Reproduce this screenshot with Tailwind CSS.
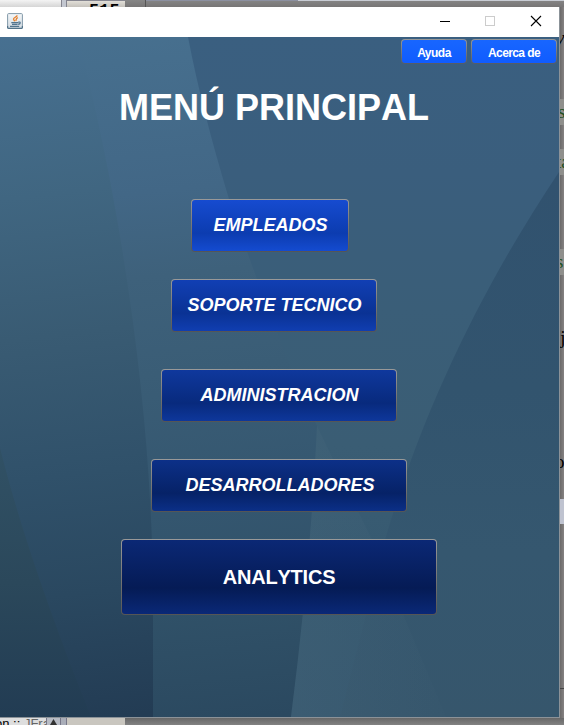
<!DOCTYPE html>
<html lang="es">
<head>
<meta charset="utf-8">
<title>Menú principal</title>
<script src="https://cdn.jsdelivr.net/npm/@tailwindcss/browser@4"></script>
</head>
<body class="relative h-[725px] w-[564px] overflow-hidden bg-[#808080] font-['Liberation_Sans',Arial,sans-serif]">
<!-- Editor behind the window: top strip -->
<div class="flex h-[7px] overflow-hidden bg-gradient-to-b from-[#868686] to-[#777575]">
  <div class="w-[61px] bg-gradient-to-b from-[#f4f4f4] to-[#d5d5d5]"></div>
  <div class="w-[5px] border-l border-[#85858f] bg-[#c3c7d0]"></div>
  <div class="relative w-[59px] border-l border-t border-[#85858f] bg-gradient-to-b from-[#e2dfd8] to-[#c5c2bc]"><span class="absolute left-[22px] top-[2px] font-['Liberation_Mono',monospace] text-[17px] leading-[16px] font-bold text-black">515</span></div>
  <div class="w-[21px] border-r border-[#555]"></div>
  <div class="w-[152px] border-t border-[#8c90a0]"></div>
  <div class="flex-1 border-t border-[#c8ccd4]"></div>
</div>
<div class="flex h-[711px]">
  <!-- Application window -->
  <main class="flex w-[560px] flex-col border-b border-r border-[#8b9298]">
    <header class="flex h-[30px] shrink-0 items-center bg-white pl-[7px]">
      <svg class="mt-[-2px] h-4 w-4" viewBox="0 0 16 16" fill="none">
        <defs><linearGradient id="ic" x2="0" y2="1"><stop stop-color="#f4f7f9"/><stop offset="1" stop-color="#d3dce3"/></linearGradient></defs>
        <rect x=".6" y=".6" width="14.8" height="14.8" rx="1" fill="url(#ic)" stroke="#8299a8"/>
        <path d="M.7 13v2.3h14.6V13" stroke="#456880"/>
        <path d="M10.200 2.300C10 4 6.300 4.500 6.500 6.200 6.700 7.200 7.600 7.400 7.700 8.400M10.900 4.600C8.300 5.400 9.800 6.400 8.700 7.800" stroke="#e7802d" stroke-width="1.300"/>
        <path d="M4.300 9.600h7M5 11.300h5.600M3 13.300h9.200M11.300 9.100c2.600-.6 2.600 1.900-.2 2.300" stroke="#53758e" stroke-width="1.200"/>
      </svg>
      <svg class="ml-auto h-[30px] w-[137px]" viewBox="0 0 137 30" fill="none" shape-rendering="crispEdges">
        <path d="M18 14.500h10" stroke="#000"/>
        <rect x="63.500" y="9.500" width="9" height="9" stroke="#ccc"/>
        <path d="M109 9l10 10M119 9l-10 10" stroke="#000" stroke-width="1.100" shape-rendering="auto"/>
      </svg>
    </header>
    <section class="relative isolate flex h-[680px] flex-col items-start overflow-hidden">
      <svg class="absolute inset-0 -z-10 h-[680px] w-[559px]" viewBox="0 37 559 680" preserveAspectRatio="none">
        <defs>
          <linearGradient id="base" x2="0" y2="1"><stop stop-color="#3a5f80"/><stop offset=".2" stop-color="#3a5e7d"/><stop offset=".4" stop-color="#3a5e78"/><stop offset=".6" stop-color="#3a5d74"/><stop offset=".8" stop-color="#365970"/><stop offset="1" stop-color="#36576e"/></linearGradient>
          <linearGradient id="mid" gradientUnits="userSpaceOnUse" x1="180" y1="20" x2="250" y2="717"><stop stop-color="#47708f"/><stop offset=".24" stop-color="#426786"/><stop offset=".36" stop-color="#3e617b"/><stop offset=".5" stop-color="#3a5d76"/><stop offset=".7" stop-color="#34566f"/><stop offset=".84" stop-color="#305168"/><stop offset="1" stop-color="#2b4960"/></linearGradient>
          <linearGradient id="left" gradientUnits="userSpaceOnUse" x1="30" y1="20" x2="110" y2="717"><stop stop-color="#487192"/><stop offset=".25" stop-color="#406681"/><stop offset=".45" stop-color="#395b73"/><stop offset=".65" stop-color="#30516a"/><stop offset=".82" stop-color="#2a4860"/><stop offset="1" stop-color="#233c54"/></linearGradient>
          <linearGradient id="corner" x2="0" y2="1"><stop stop-color="#315165"/><stop offset=".5" stop-color="#2b485b"/><stop offset="1" stop-color="#223c53"/></linearGradient>
          <linearGradient id="right" x2="0" y2="1"><stop stop-color="#31526f"/><stop offset=".4" stop-color="#32546e"/><stop offset=".7" stop-color="#35576f"/><stop offset="1" stop-color="#36566c"/></linearGradient>
          <linearGradient id="facet" gradientUnits="userSpaceOnUse" x1="300" y1="0" x2="440" y2="0"><stop stop-color="#48687c" stop-opacity=".28"/><stop offset="1" stop-color="#48687c" stop-opacity=".05"/></linearGradient>
        </defs>
        <path fill="url(#base)" d="M0 37h559v680H0z"/>
        <path fill="url(#mid)" d="M0 37H188Q202 110 229 199 254 275 292 370L317 426Q311 560 291 717H0z"/>
        <path fill="url(#left)" d="M0 37H78C125 220 153 430 153 600V717H0z"/>
        <path fill="url(#corner)" d="M0 448Q28 560 91 717H0z"/>
        <path fill="url(#right)" d="M559 172C490 275 425 400 385 540L340 717H559z"/>
        <path fill="url(#facet)" d="M317 426L372 540 446 717H291Q311 560 317 426z"/>
      </svg>
      <nav class="mt-[2px] mr-[2px] flex gap-[4px] self-end text-[12px] font-bold text-white">
        <button class="h-[25px] w-[66px] rounded-[4px] bg-gradient-to-b from-[#999] to-[#555b66] p-px"><span class="flex h-full items-center justify-center rounded-[3px] bg-gradient-to-b from-[#1866ff] to-[#105cff] pt-[2px] tracking-[-0.5px]">Ayuda</span></button>
        <button class="h-[25px] w-[86px] rounded-[4px] bg-gradient-to-b from-[#999] to-[#555b66] p-px"><span class="flex h-full items-center justify-center rounded-[3px] bg-gradient-to-b from-[#1866ff] to-[#105cff] pt-[2px] tracking-[-0.6px]">Acerca de</span></button>
      </nav>
      <h1 class="mt-[24px] ml-[119px] h-[40px] text-[36px] leading-[40px] font-bold whitespace-nowrap text-white [font-kerning:none]">MENÚ PRINCIPAL</h1>
      <div class="mt-[71px] ml-[121px] flex w-[316px] flex-col text-[18px] font-bold text-white italic [font-kerning:none]">
        <button class="ml-[70px] h-[53px] w-[158px] rounded-[4px] bg-gradient-to-b from-[#999] to-[#555] p-px"><span class="flex h-full items-center justify-center rounded-[3px] bg-linear-[#164bd0,#0c3cb0_65%,#144bd0] pb-px pl-px italic">EMPLEADOS</span></button>
        <button class="mt-[27px] ml-[50px] h-[53px] w-[206px] rounded-[4px] bg-gradient-to-b from-[#999] to-[#555] p-px"><span class="flex h-full items-center justify-center rounded-[3px] bg-linear-[#113fb4,#0a3294_65%,#103eb1] pb-px pl-px italic">SOPORTE TECNICO</span></button>
        <button class="mt-[37px] ml-[40px] h-[53px] w-[236px] rounded-[4px] bg-gradient-to-b from-[#999] to-[#555] p-px"><span class="flex h-full items-center justify-center rounded-[3px] bg-linear-[#0f389d,#082a7d_65%,#0e379b] pb-px pl-px italic">ADMINISTRACION</span></button>
        <button class="mt-[37px] ml-[30px] h-[53px] w-[256px] rounded-[4px] bg-gradient-to-b from-[#999] to-[#555] p-px"><span class="flex h-full items-center justify-center rounded-[3px] bg-linear-[#0c3088,#062267_65%,#0b2f87] pb-px pl-[2px] italic">DESARROLLADORES</span></button>
        <button class="mt-[27px] h-[76px] w-[316px] rounded-[4px] bg-gradient-to-b from-[#999] to-[#555] p-px text-[20px] not-italic"><span class="flex h-full items-center justify-center rounded-[3px] bg-linear-[#0b2875,#051b55_65%,#0a2877] tracking-[-0.2px]">ANALYTICS</span></button>
      </div>
    </section>
  </main>
  <!-- Visible edge of the editor's code -->
  <aside class="relative w-[4px] overflow-hidden bg-gradient-to-r from-[#6b6969] to-[#858282] font-['Liberation_Serif',serif] text-[19px] leading-[20px] text-black">
    <span class="absolute -left-[4px] top-[21px] italic">y</span>
    <span class="absolute top-[92px] h-[26px] w-1 bg-[#8f8f8c] pt-[3px] text-[#245024]"><i class="absolute -left-[2px] not-italic">s</i></span>
    <span class="absolute top-[142px] h-[26px] w-1 bg-[#8f8f8c] pt-[3px] text-[#245024]"><i class="absolute -left-[4px] not-italic">ta</i></span>
    <span class="absolute top-[242px] h-[26px] w-1 bg-[#8f8f8c] pt-[3px] text-[#245024]"><i class="absolute -left-[4px] not-italic">s</i></span>
    <span class="absolute -left-[6px] top-[321px]">(j</span>
    <span class="absolute -left-[5px] top-[445px]">o</span>
    <span class="absolute top-[492px] h-[25px] w-1 bg-[#bfc3d0]"></span>
    <span class="absolute top-[681px] h-px w-1 bg-[#444]"></span>
  </aside>
</div>
<!-- Editor behind the window: bottom strip -->
<div class="flex h-[7px] overflow-hidden bg-gradient-to-b from-[#686868] to-[#828282]">
  <div class="relative w-[46px] overflow-hidden bg-[#dedede] text-[13px] leading-[14px] whitespace-pre text-black"><span class="absolute -left-[5px] -top-[1px]">on :: <span class="text-[#666]">JFrame</span></span></div>
  <div class="flex w-[15px] justify-center border-x border-[#777788] bg-[#b8bcc5]"><svg class="h-[7px] w-[9px]" viewBox="0 0 9 7"><path fill="#333" d="M4.500 1L8 7H1z"/></svg></div>
  <div class="w-[5px] bg-[#a9adb8]"></div>
  <div class="relative w-[59px] overflow-hidden border-l border-[#777788] bg-[#c9c6bf]"><span class="absolute left-[22px] -top-[12px] font-['Liberation_Mono',monospace] text-[17px] leading-[16px] font-bold text-black">540</span></div>
</div>
</body>
</html>
